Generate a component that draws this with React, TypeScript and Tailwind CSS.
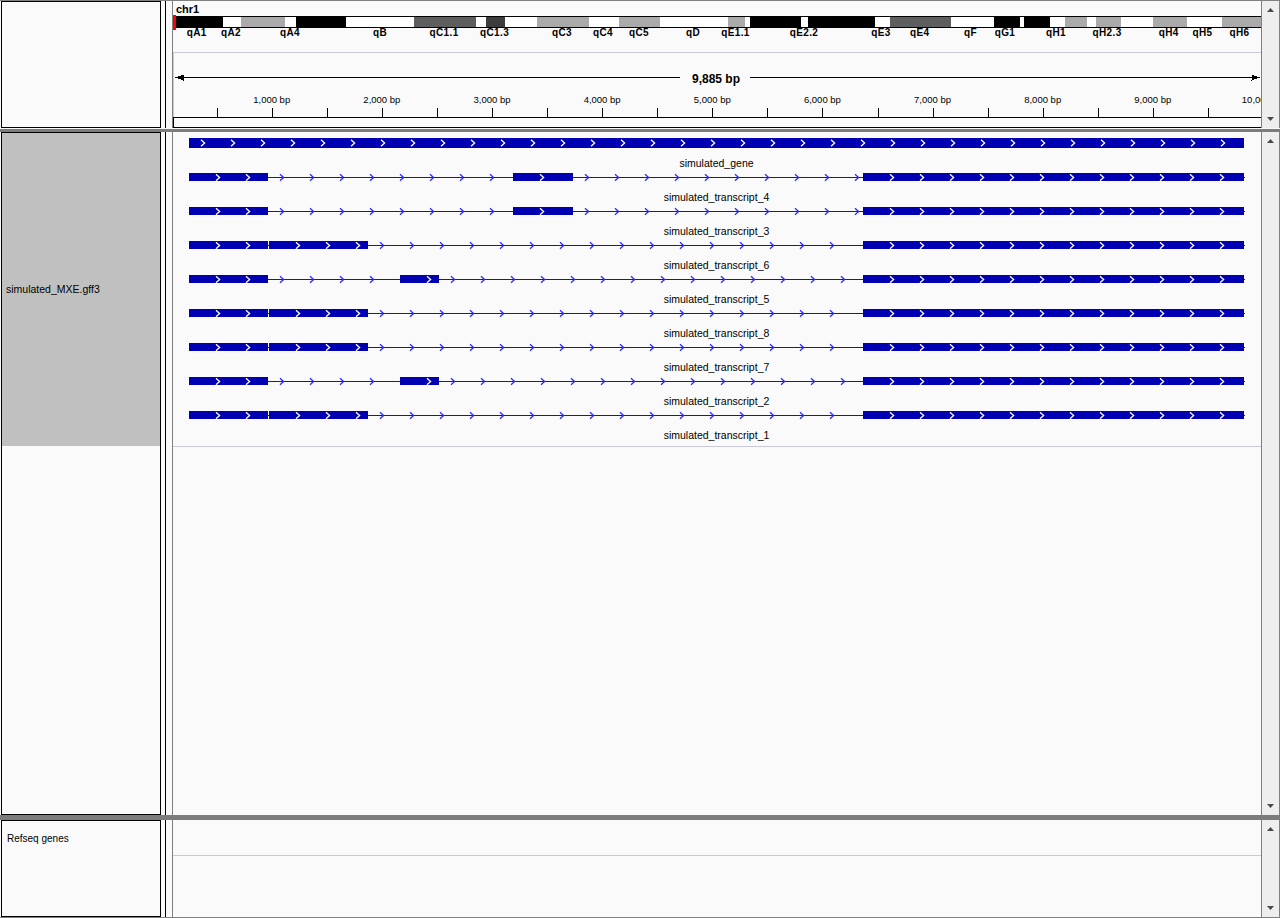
import React from 'react';

const SANS = "'Liberation Sans', Arial, sans-serif";
const EXON = '#0000b2';
const INTRON = '#1414b8';
const INTRON_CHEV = '#2a2aff';
const LAV = '#c8c8d8';

const bands: [number, number, string][] = [
  [176, 223, '#000000'],
  [223, 241, '#ffffff'],
  [241, 285, '#aaaaaa'],
  [285, 296, '#ffffff'],
  [296, 346, '#000000'],
  [346, 414, '#ffffff'],
  [414, 476, '#5e5e5e'],
  [476, 486, '#ffffff'],
  [486, 505, '#3c3c3c'],
  [505, 537, '#ffffff'],
  [537, 589, '#aaaaaa'],
  [589, 619, '#ffffff'],
  [619, 660, '#aaaaaa'],
  [660, 728, '#ffffff'],
  [728, 745, '#aaaaaa'],
  [745, 750, '#ffffff'],
  [750, 801, '#000000'],
  [801, 808, '#ffffff'],
  [808, 875, '#000000'],
  [875, 890, '#ffffff'],
  [890, 951, '#5e5e5e'],
  [951, 994, '#ffffff'],
  [994, 1020, '#000000'],
  [1020, 1024, '#ffffff'],
  [1024, 1050, '#000000'],
  [1050, 1065, '#ffffff'],
  [1065, 1087, '#aaaaaa'],
  [1087, 1096, '#ffffff'],
  [1096, 1121, '#aaaaaa'],
  [1121, 1153, '#ffffff'],
  [1153, 1187, '#aaaaaa'],
  [1187, 1222, '#ffffff'],
  [1222, 1261, '#aaaaaa'],
];

const bandLabels: [string, number][] = [
  ['qA1', 196.7],
  ['qA2', 231],
  ['qA4', 290],
  ['qB', 380],
  ['qC1.1', 444],
  ['qC1.3', 494.5],
  ['qC3', 562],
  ['qC4', 603],
  ['qC5', 639],
  ['qD', 693],
  ['qE1.1', 735.5],
  ['qE2.2', 804],
  ['qE3', 881],
  ['qE4', 919.7],
  ['qF', 970.5],
  ['qG1', 1005],
  ['qH1', 1056],
  ['qH2.3', 1107],
  ['qH4', 1168.7],
  ['qH5', 1202.5],
  ['qH6', 1239.5],
];

type Ex = [number, number];
const A: Ex = [189, 268];
const B: Ex = [269, 368];
const C: Ex = [513, 573];
const D: Ex = [400, 439];
const E: Ex = [863, 1244];

const transcripts: [string, Ex[]][] = [
  ['simulated_transcript_4', [A, C, E]],
  ['simulated_transcript_3', [A, C, E]],
  ['simulated_transcript_6', [A, B, E]],
  ['simulated_transcript_5', [A, D, E]],
  ['simulated_transcript_8', [A, B, E]],
  ['simulated_transcript_7', [A, B, E]],
  ['simulated_transcript_2', [A, D, E]],
  ['simulated_transcript_1', [A, B, E]],
];

const OX = 173;

function chev(pageX: number, cy: number, color: string, key: string) {
  const cx = Math.round(pageX - OX);
  return (
    <polyline
      key={key}
      points={`${cx - 2},${cy - 3.2} ${cx + 1.6},${cy} ${cx - 2},${cy + 3.2}`}
      fill="none"
      stroke={color}
      strokeWidth={1.3}
      shapeRendering="geometricPrecision"
    />
  );
}

function ScrollArrow({ up }: { up: boolean }) {
  return (
    <svg width="7" height="4" viewBox="0 0 7 4" className="block">
      <polygon points={up ? '0,4 3.5,0 7,4' : '0,0 3.5,4 7,0'} fill="#4a4a4a" />
    </svg>
  );
}

function Scrollbar() {
  return (
    <div className="w-[18px] h-full border-r border-[#808080] bg-[#eeeeee] flex flex-col items-center justify-between pt-[7px] pb-[7px]">
      <ScrollArrow up />
      <ScrollArrow up={false} />
    </div>
  );
}

function HeaderTrack() {
  const ticks = Array.from({ length: 20 }, (_, j) => Math.round(43.7 + 55.07 * j) + 0.5);
  const labels = Array.from({ length: 10 }, (_, k) => ({
    x: 98.7 + 110.14 * k,
    t: k + 1 === 10 ? '10,000 bp' : `${k + 1},000 bp`,
  }));
  return (
    <svg width={1088} height={127} className="block" shapeRendering="crispEdges">
      <text x={3} y={12} fontFamily={SANS} fontWeight="bold" fontSize={11} fill="#000">
        chr1
      </text>
      {bands.map(([a, b, c], i) => (
        <rect key={i} x={a - OX} y={15} width={b - a} height={12} fill={c} />
      ))}
      <line x1={3} x2={1088} y1={15.5} y2={15.5} stroke="#000" />
      <line x1={3} x2={1088} y1={26.5} y2={26.5} stroke="#000" />
      <rect x={0} y={14} width={3} height={15} fill="#ff0000" />
      {bandLabels.map(([t, x]) => (
        <text
          key={t}
          x={x - OX}
          y={35}
          textAnchor="middle"
          fontFamily={SANS}
          fontWeight="bold"
          fontSize={10}
          letterSpacing={0.4}
          fill="#000"
        >
          {t}
        </text>
      ))}
      <line x1={0} x2={1088} y1={51.5} y2={51.5} stroke={LAV} />
      <line x1={0.5} x2={0.5} y1={51.5} y2={116} stroke={LAV} />
      <line x1={2} x2={507} y1={76.5} y2={76.5} stroke="#000" />
      <line x1={577} x2={1087} y1={76.5} y2={76.5} stroke="#000" />
      <polygon points="2,76.5 10.5,73.5 10.5,79.5" fill="#000" />
      <polygon points="1087,76.5 1078.5,73.5 1078.5,79.5" fill="#000" />
      <text x={543} y={82} textAnchor="middle" fontFamily={SANS} fontWeight="bold" fontSize={12} fill="#000">
        9,885 bp
      </text>
      {labels.map((l) => (
        <text key={l.t} x={l.x} y={102} textAnchor="middle" fontFamily={SANS} fontSize={9.5} fill="#000">
          {l.t}
        </text>
      ))}
      {ticks.map((x) => (
        <line key={x} x1={x} x2={x} y1={107} y2={116} stroke="#000" />
      ))}
      <rect x={0.5} y={116.5} width={1090} height={10} fill="none" stroke="#000" />
    </svg>
  );
}

function FeatureTrack() {
  const els: React.ReactNode[] = [];
  els.push(<rect key="gene" x={189 - OX} y={6} width={1244 - 189} height={10} fill={EXON} />);
  for (let x = 202.7; x <= 1238; x += 30) els.push(chev(x, 11, '#ffffff', `g${x}`));
  els.push(
    <text key="gl" x={543.5} y={35} textAnchor="middle" fontFamily={SANS} fontSize={10.5} fill="#000">
      simulated_gene
    </text>
  );
  transcripts.forEach(([name, exons], idx) => {
    const i = idx + 1;
    const top = 41 + 34 * (i - 1);
    const cy = top + 4.5;
    els.push(
      <line
        key={`l${i}`}
        x1={exons[0][0] - OX}
        x2={exons[exons.length - 1][1] + 1 - OX}
        y1={cy}
        y2={cy}
        stroke={INTRON}
      />
    );
    for (let e = 0; e < exons.length - 1; e++) {
      const s = exons[e][1];
      const en = exons[e + 1][0];
      for (let x = s + 13.7; x <= en - 6; x += 30) els.push(chev(x, cy, INTRON_CHEV, `ic${i}-${e}-${x}`));
    }
    exons.forEach(([s, en], k) => {
      els.push(<rect key={`e${i}-${k}`} x={s - OX} y={top} width={en - s} height={8} fill={EXON} />);
      for (let x = s + 29; x <= en - 6; x += 30) els.push(chev(x, cy, '#ffffff', `ec${i}-${k}-${x}`));
    });
    els.push(
      <text key={`t${i}`} x={543.5} y={35 + 34 * i} textAnchor="middle" fontFamily={SANS} fontSize={10.5} fill="#000">
        {name}
      </text>
    );
  });
  return (
    <svg width={1088} height={683} className="block" shapeRendering="crispEdges">
      {els}
      <line x1={0} x2={1088} y1={314.5} y2={314.5} stroke={LAV} />
    </svg>
  );
}

export default function App() {
  return (
    <div className="w-[1280px] h-[918px] bg-[#fafafa] flex flex-col border-t border-b border-[#808080] overflow-hidden text-black font-['Liberation_Sans',Arial,sans-serif]">
      <div className="flex h-[127px] shrink-0">
        <div className="w-[1px]" />
        <div className="w-[160px] h-full border border-black" />
        <div className="w-[5px] border-r border-black" />
        <div className="w-[6px]" />
        <div className="w-[1090px] h-full border-x border-[#808080]">
          <HeaderTrack />
        </div>
        <Scrollbar />
      </div>
      <div className="h-[4px] shrink-0 border-t border-[#fafafa] bg-[#7c7c7c]" />
      <div className="flex h-[683px] shrink-0">
        <div className="w-[1px]" />
        <div className="w-[160px] h-full border border-black flex flex-col">
          <div className="h-[313px] bg-[#c0c0c0] flex items-center pl-[4px] text-[10.5px] leading-none">
            simulated_MXE.gff3
          </div>
        </div>
        <div className="w-[5px] border-r border-black" />
        <div className="w-[6px]" />
        <div className="w-[1090px] h-full border-x border-[#808080] overflow-hidden">
          <FeatureTrack />
        </div>
        <Scrollbar />
      </div>
      <div className="h-[5px] shrink-0 bg-[#7c7c7c]" />
      <div className="flex h-[97px] shrink-0">
        <div className="w-[1px]" />
        <div className="w-[160px] h-full border border-black flex flex-col">
          <div className="h-[35px] flex items-center pl-[5px] text-[10px] leading-none">Refseq genes</div>
        </div>
        <div className="w-[5px] border-r border-black" />
        <div className="w-[6px]" />
        <div className="w-[1090px] h-full border-x border-[#808080]">
          <div className="h-[36px] border-b border-[#c8c8d8]" />
        </div>
        <Scrollbar />
      </div>
    </div>
  );
}
